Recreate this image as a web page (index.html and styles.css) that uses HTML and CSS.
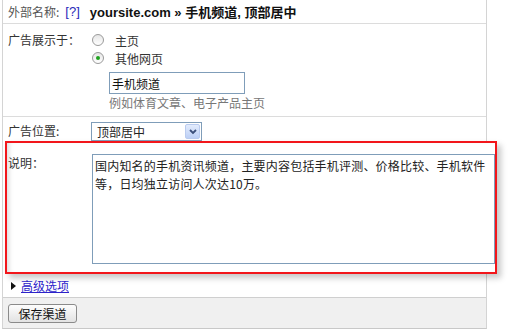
FILE: index.html
```html
<!DOCTYPE html>
<html lang="zh-CN">
<head>
  <meta charset="UTF-8" />
  <title>渠道设置</title>
  <link rel="stylesheet" href="styles.css">
</head>
<body>
  <div class="panel">
    <div class="head">
      <span class="head-label">外部名称:</span>
      <a class="help">[?]</a>
      <strong class="head-title">yoursite.com » 手机频道, 顶部居中</strong>
    </div>

    <div class="row row-show">
      <div class="label">广告展示于：</div>
      <div class="field">
        <div class="opt"><span class="radio"></span>主页</div>
        <div class="opt"><span class="radio checked"></span>其他网页</div>
        <div class="sub">
          <input class="text" type="text" value="手机频道" />
          <div class="hint">例如体育文章、电子产品主页</div>
        </div>
      </div>
    </div>

    <div class="row row-pos">
      <div class="label">广告位置:</div>
      <div class="field">
        <div class="select">
          <span>顶部居中</span>
          <span class="arrow">
            <svg width="8" height="6" viewBox="0 0 8 6"><path d="M1 1 L4 4 L7 1" fill="none" stroke="#3b4f7a" stroke-width="1.8"/></svg>
          </span>
        </div>
      </div>
    </div>

    <!-- 高亮的说明区域 -->
    <div class="row highlight">
      <div class="label">说明：</div>
      <div class="field">
        <textarea class="desc">国内知名的手机资讯频道，主要内容包括手机评测、价格比较、手机软件等，日均独立访问人次达10万。</textarea>
      </div>
    </div>

    <div class="more">
      <span class="tri"></span>
      <a class="more-link">高级选项</a>
    </div>

    <div class="footer">
      <button class="save">保存渠道</button>
    </div>
  </div>
</body>
</html>
```

FILE: styles.css
```css
body {
  margin: 0;
  background: #fff;
  font-family: "Noto Sans CJK SC", "Liberation Sans", sans-serif;
  font-size: 12px;
  color: #333;
}
.panel {
  margin-left: 2px;
  width: 483px;
  border-left: 1px solid #d4d4d4;
  border-right: 1px solid #d4d4d4;
  border-bottom: 1px solid #c8c8c8;
}
.head {
  height: 24px;
  box-sizing: border-box;
  border-bottom: 1px solid #dcdcdc;
  padding: 0 5px;
  display: flex;
  align-items: center;
}
.head-label {
  color: #555;
}
.help {
  margin-left: 6px;
  color: #2a2ab8;
  font-family: "Liberation Sans", sans-serif;
  font-size: 13px;
}
.head-title {
  margin-left: 10px;
  font-family: "Liberation Sans", "Noto Sans CJK SC", sans-serif;
  font-size: 13px;
  color: #111;
}
.row {
  display: grid;
  grid-template-columns: 83px 1fr;
  padding-left: 5px;
}
.label {
  line-height: 18px;
  color: #333;
}
.row-show {
  padding-top: 7px;
  padding-bottom: 6px;
  border-bottom: 1px solid #dcdcdc;
  height: 79px;
}
.opt {
  display: flex;
  align-items: center;
  height: 18px;
  padding-left: 1px;
}
.radio {
  width: 10px;
  height: 10px;
  border: 1px solid #9a9a9a;
  border-radius: 50%;
  background: linear-gradient(#e6e6e6, #fff);
  margin-right: 11px;
  display: flex;
  align-items: center;
  justify-content: center;
}
.radio.checked::after {
  content: "";
  width: 4px;
  height: 4px;
  border-radius: 50%;
  background: #1fa21f;
}
.sub {
  padding-left: 18px;
  padding-top: 5px;
}
.text {
  width: 136px;
  height: 22px;
  box-sizing: border-box;
  border: 1px solid #7f9db9;
  padding: 0 2px;
  font-family: "Noto Sans CJK SC", sans-serif;
  font-size: 12px;
  color: #111;
  outline: none;
}
.hint {
  color: #777;
  line-height: 16px;
  margin-top: 1px;
}
.row-pos {
  height: 24px;
  padding-top: 5px;
  box-sizing: border-box;
}
.select {
  width: 111px;
  height: 19px;
  box-sizing: border-box;
  border: 1px solid #7f9db9;
  display: flex;
  align-items: center;
  justify-content: space-between;
  padding-left: 5px;
  color: #222;
}
.arrow {
  width: 15px;
  height: 15px;
  margin-right: 1px;
  box-sizing: border-box;
  border: 1px solid #b9cbef;
  border-radius: 2px;
  background: linear-gradient(#e3ecfd, #bccff5);
  display: flex;
  align-items: center;
  justify-content: center;
}
.highlight {
  margin-left: 2px;
  width: 492px;
  box-sizing: border-box;
  border: 2px solid #f2161b;
  background: #fff;
  padding: 11px 1px 8px 1px;
  grid-template-columns: 84px 1fr;
  box-shadow: 4px 4px 6px rgba(0, 0, 0, 0.22), inset 5px 0 5px -3px rgba(0, 0, 0, 0.14);
}
.desc {
  display: block;
  width: 403px;
  height: 110px;
  box-sizing: border-box;
  border: 1px solid #7f9db9;
  padding: 2px 5px 2px 2px;
  font-family: "Noto Sans CJK SC", sans-serif;
  font-size: 12px;
  letter-spacing: 0.2px;
  line-height: 18px;
  color: #222;
  resize: none;
  overflow: hidden;
  outline: none;
}
.more {
  height: 23px;
  display: flex;
  align-items: center;
  padding-left: 8px;
}
.tri {
  width: 0;
  height: 0;
  border-top: 4px solid transparent;
  border-bottom: 4px solid transparent;
  border-left: 5px solid #111;
  margin-right: 5px;
}
.more-link {
  color: #2d23c9;
  text-decoration: underline;
  font-size: 12px;
}
.footer {
  border-top: 1px solid #cfcfcf;
  background: #f0f0f0;
  height: 31px;
  padding: 6px 5px 0;
  box-sizing: border-box;
}
.save {
  width: 69px;
  height: 19px;
  border: 1px solid #8a8a8a;
  border-radius: 3px;
  background: linear-gradient(#fdfdfd, #e2e2e2);
  font-family: "Noto Sans CJK SC", sans-serif;
  font-size: 12px;
  color: #111;
  padding: 0;
  line-height: 16px;
}
```
